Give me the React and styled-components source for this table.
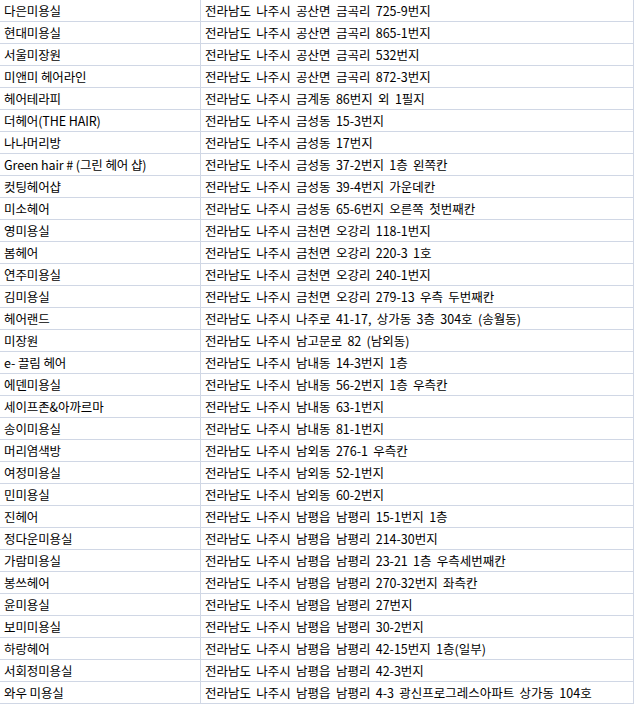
import styled, { createGlobalStyle } from "styled-components";

const rows = [
  ["다은미용실", "전라남도 나주시 공산면 금곡리 725-9번지"],
  ["현대미용실", "전라남도 나주시 공산면 금곡리 865-1번지"],
  ["서울미장원", "전라남도 나주시 공산면 금곡리 532번지"],
  ["미앤미 헤어라인", "전라남도 나주시 공산면 금곡리 872-3번지"],
  ["헤어테라피", "전라남도 나주시 금계동 86번지 외 1필지"],
  ["더헤어(THE HAIR)", "전라남도 나주시 금성동 15-3번지"],
  ["나나머리방", "전라남도 나주시 금성동 17번지"],
  ["Green hair # (그린 헤어 샵)", "전라남도 나주시 금성동 37-2번지 1층 왼쪽칸"],
  ["컷팅헤어샵", "전라남도 나주시 금성동 39-4번지 가운데칸"],
  ["미소헤어", "전라남도 나주시 금성동 65-6번지 오른쪽 첫번째칸"],
  ["영미용실", "전라남도 나주시 금천면 오강리 118-1번지"],
  ["봄헤어", "전라남도 나주시 금천면 오강리 220-3 1호"],
  ["연주미용실", "전라남도 나주시 금천면 오강리 240-1번지"],
  ["김미용실", "전라남도 나주시 금천면 오강리 279-13 우측 두번째칸"],
  ["헤어랜드", "전라남도 나주시 나주로 41-17, 상가동 3층 304호 (송월동)"],
  ["미장원", "전라남도 나주시 남고문로 82 (남외동)"],
  ["e- 끌림 헤어", "전라남도 나주시 남내동 14-3번지 1층"],
  ["에덴미용실", "전라남도 나주시 남내동 56-2번지 1층 우측칸"],
  ["세이프존&아까르마", "전라남도 나주시 남내동 63-1번지"],
  ["송이미용실", "전라남도 나주시 남내동 81-1번지"],
  ["머리염색방", "전라남도 나주시 남외동 276-1 우측칸"],
  ["여정미용실", "전라남도 나주시 남외동 52-1번지"],
  ["민미용실", "전라남도 나주시 남외동 60-2번지"],
  ["진헤어", "전라남도 나주시 남평읍 남평리 15-1번지 1층"],
  ["정다운미용실", "전라남도 나주시 남평읍 남평리 214-30번지"],
  ["가람미용실", "전라남도 나주시 남평읍 남평리 23-21 1층 우측세번째칸"],
  ["봉쓰헤어", "전라남도 나주시 남평읍 남평리 270-32번지 좌측칸"],
  ["윤미용실", "전라남도 나주시 남평읍 남평리 27번지"],
  ["보미미용실", "전라남도 나주시 남평읍 남평리 30-2번지"],
  ["하랑헤어", "전라남도 나주시 남평읍 남평리 42-15번지 1층(일부)"],
  ["서회정미용실", "전라남도 나주시 남평읍 남평리 42-3번지"],
  ["와우 미용실", "전라남도 나주시 남평읍 남평리 4-3 광신프로그레스아파트 상가동 104호"],
];

const App = () => (
  <>
    <GlobalStyle />
    <Sheet>
      {rows.map(([name, address]) => (
        <Row key={name}>
          <Cell>{name}</Cell>
          <Cell $wide>{address}</Cell>
        </Row>
      ))}
    </Sheet>
  </>
);

export default App;

const GlobalStyle = createGlobalStyle`
  body {
    margin: 0;
    background: #fff;
  }
`;

const Sheet = styled.div`
  width: 634px;
  font-family: "Noto Sans CJK KR", "Noto Sans", sans-serif;
  font-size: 12.5px;
  color: #000;
`;

const Row = styled.div`
  display: grid;
  grid-template-columns: 201px 433px;
  height: 22px;
`;

const Cell = styled.div`
  box-sizing: border-box;
  height: 22px;
  line-height: 21px;
  padding-left: 4px;
  word-spacing: ${({ $wide }) => ($wide ? "2.5px" : "0")};
  letter-spacing: ${({ $wide }) => ($wide ? "0" : "-0.1px")};
  border-bottom: 1px solid #d0d7e5;
  border-right: 1px solid #d0d7e5;
  white-space: nowrap;
  overflow: hidden;
`;
